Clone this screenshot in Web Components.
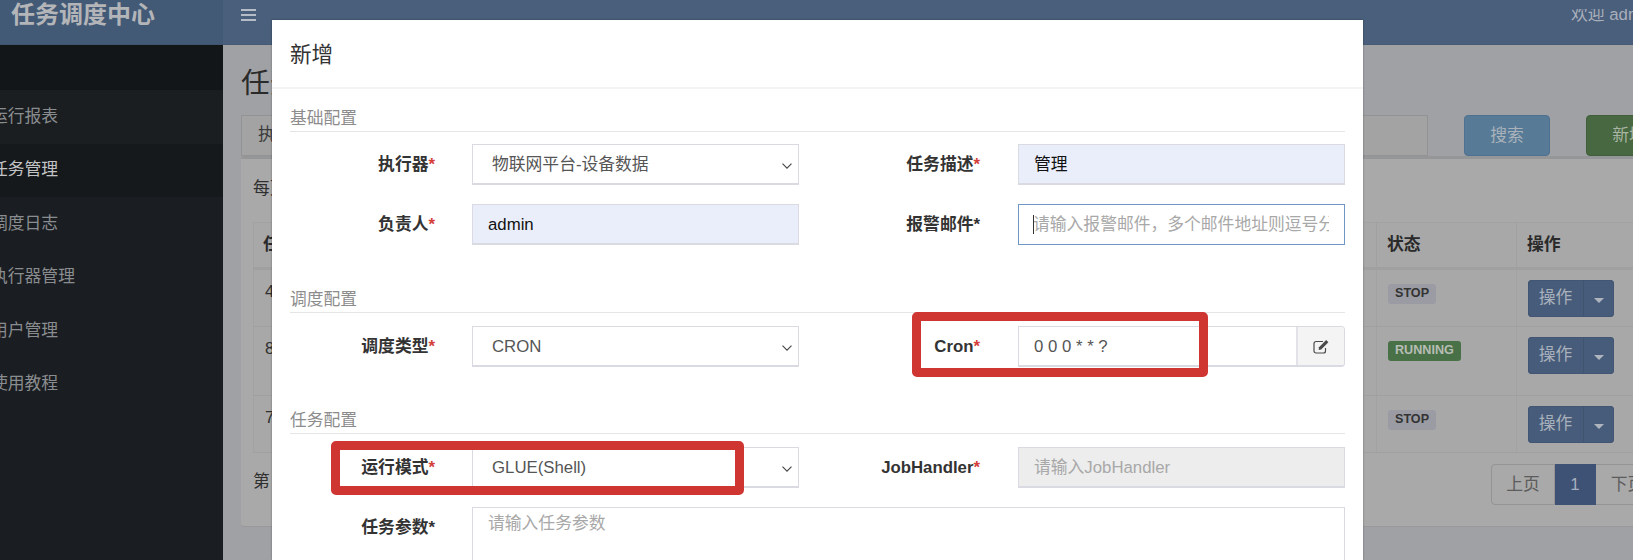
<!DOCTYPE html>
<html lang="zh">
<head>
<meta charset="utf-8">
<title>任务管理</title>
<style>
  html, body { margin: 0; height: 560px; overflow: hidden; }
  body { font: 16.8px/24px "Liberation Sans", "Noto Sans CJK SC", sans-serif; color: #333; background: #a0a1a4; }
</style>
</head>
<body>
<app-shell>
  <app-header slot="header" logo="任务调度中心" user="欢迎 admin"></app-header>
  <side-menu slot="side">
    <menu-item>运行报表</menu-item>
    <menu-item active>任务管理</menu-item>
    <menu-item>调度日志</menu-item>
    <menu-item>执行器管理</menu-item>
    <menu-item>用户管理</menu-item>
    <menu-item>使用教程</menu-item>
  </side-menu>
  <job-page></job-page>
</app-shell>

<modal-dialog heading="新增">
  <form-section heading="基础配置">
    <form-row>
      <form-field label="执行器"><form-input kind="select" value="物联网平台-设备数据"></form-input></form-field>
      <form-field wide label="任务描述"><form-input kind="filled" value="管理"></form-input></form-field>
    </form-row>
    <form-row>
      <form-field label="负责人"><form-input kind="filled" value="admin"></form-input></form-field>
      <form-field wide label="报警邮件" plain><form-input kind="focus" placeholder="请输入报警邮件，多个邮件地址则逗号分隔"></form-input></form-field>
    </form-row>
  </form-section>
  <form-section heading="调度配置">
    <form-row>
      <form-field label="调度类型"><form-input kind="select" value="CRON"></form-input></form-field>
      <form-field wide label="Cron"><form-input kind="addon" value="0 0 0 * * ?"></form-input></form-field>
    </form-row>
  </form-section>
  <form-section heading="任务配置" style="margin-top:-1px">
    <form-row>
      <form-field label="运行模式"><form-input kind="select" value="GLUE(Shell)"></form-input></form-field>
      <form-field wide label="JobHandler"><form-input kind="disabled" placeholder="请输入JobHandler"></form-input></form-field>
    </form-row>
    <form-row>
      <form-field full label="任务参数" plain><form-input kind="area" placeholder="请输入任务参数"></form-input></form-field>
    </form-row>
  </form-section>
  <mark-box slot="marks" style="left:640px;top:292px;width:296px;height:65px"></mark-box>
  <mark-box slot="marks" style="left:59px;top:421px;width:413px;height:54px"></mark-box>
</modal-dialog>

<script>
// small helper, every element just sets its shadow html once
class Base extends HTMLElement {
  connectedCallback() {
    if (this.shadowRoot) return;
    this.attachShadow({mode: 'open'}).innerHTML = this.render();
  }
  attr(name, dflt = '') { return this.getAttribute(name) ?? dflt; }
}

customElements.define('app-shell', class extends Base {
  render() { return `
    <style>
      :host { display: block; width: 1633px; height: 560px; overflow: hidden; }
      .below { display: flex; height: 515px; }
    </style>
    <slot name="header"></slot>
    <div class="below"><slot name="side"></slot><slot></slot></div>`; }
});

customElements.define('app-header', class extends Base {
  render() { return `
    <style>
      :host { display: flex; height: 45px; background: #4a5f7b; box-sizing: border-box; box-shadow: inset 0 -1px 0 #455a73; }
      .logo { width: 223px; flex: none; box-sizing: border-box; padding: 3px 0 0 11px; background: #435a77; color: #b3b5b8; font-size: 24px; font-weight: 700; line-height: 24px; box-shadow: inset 0 -1px 0 #40546e; }
      .bar { flex: 1; display: flex; justify-content: space-between; padding: 9px 0 0 18px; min-width: 0; }
      .burger { width: 15px; height: 12px; display: flex; flex-direction: column; justify-content: space-between; }
      .burger i { display: block; height: 2px; background: #b5bcc6; }
      .user { width: 62px; overflow: hidden; white-space: nowrap; color: #a9b0bb; line-height: 12px; }
    </style>
    <div class="logo">${this.attr('logo')}</div>
    <div class="bar">
      <div class="burger"><i></i><i></i><i></i></div>
      <div class="user">${this.attr('user')}</div>
    </div>`; }
});

customElements.define('side-menu', class extends Base {
  render() { return `
    <style>
      :host { display: block; width: 223px; flex: none; background: #1a1d21; overflow: hidden; }
      .top { height: 45px; background: #131619; }
    </style>
    <div class="top"></div>
    <slot></slot>`; }
});

customElements.define('menu-item', class extends Base {
  render() { return `
    <style>
      :host { display: flex; align-items: center; height: 53.5px; color: #8a8d90; white-space: nowrap; }
      :host(:first-child) { background: #1a1e21; }
      :host([active]) { background: #16191c; color: #c3c4c5; }
      span { margin-left: -9px; }
    </style>
    <span><slot></slot></span>`; }
});

customElements.define('job-page', class extends Base {
  render() { return `
    <style>
      :host { display: block; width: 1450px; flex: none; box-sizing: border-box; padding: 21px 0 0 18px; }
      h1 { margin: 0 0 15px; font: 400 28.8px/34px "Liberation Sans", "Noto Sans CJK SC", sans-serif; color: #2a2a2a; }
      .filters { display: flex; height: 41px; }
      .group { width: 1187px; flex: none; box-sizing: border-box; border: 1px solid #929394; background: #a3a3a3; padding: 7px 0 0 16px; color: #3a3a3a; }
      .btn { width: 86px; flex: none; height: 41px; box-sizing: border-box; margin-left: 36px; border-radius: 4px; color: #a9b2ba; text-align: center; line-height: 39px; }
      .search { background: #577a96; border: 1px solid #4f7090; }
      .add { background: #476840; border: 1px solid #405e39; color: #a9b4a5; }
      .panel { width: 1431px; box-sizing: border-box; border-top: 3px solid #959698; background: #a9a9a9; border-radius: 3px; padding: 18px 12px 21px; color: #2f2f2f; box-shadow: 0 1px 0 #98989a; }
      .len { margin-bottom: 21px; }
      .foot { display: flex; justify-content: space-between; margin-top: 11px; height: 41px; }
      .foot span { padding-top: 6px; }
      .pager { display: flex; }
      .pager div { height: 41px; box-sizing: border-box; border: 1px solid #949494; border-left: 0; text-align: center; line-height: 39px; width: 64px; color: #5c5c5c; background: #a9a9a9; }
      .pager div:first-child { border-left: 1px solid #949494; border-radius: 4px 0 0 4px; }
      .pager .on { width: 41px; background: #3e5276; border-color: #3e5276; color: #a7afbe; }
    </style>
    <h1>任务管理</h1>
    <div class="filters">
      <div class="group">执行器</div>
      <div class="btn search">搜索</div>
      <div class="btn add">新增</div>
    </div>
    <div class="panel">
      <div class="len">每页 10 条记录</div>
      <job-table>
        <job-row id-text="4" status="STOP"></job-row>
        <job-row id-text="8" status="RUNNING" tall></job-row>
        <job-row id-text="7" status="STOP"></job-row>
      </job-table>
      <div class="foot">
        <span>第 1 页</span>
        <div class="pager"><div>上页</div><div class="on">1</div><div>下页</div></div>
      </div>
    </div>`; }
});

customElements.define('job-table', class extends Base {
  render() { return `
    <style>
      :host { display: block; width: 1407px; background: #a8a8a8; box-shadow: inset 0 0 0 1px #a2a2a2; }
      .head { display: grid; grid-template-columns: 1124px 140px 143px; height: 48px; box-sizing: border-box; border-bottom: 3px solid #a0a0a0; font-weight: 700; color: #2a2a2a; }
      .head div { padding: 11px 10px 0 10px; border-right: 1px solid #a0a0a0; }
    </style>
    <div class="head"><div>任务ID</div><div>状态</div><div>操作</div></div>
    <slot></slot>`; }
});

customElements.define('job-row', class extends Base {
  render() {
    const run = this.attr('status') === 'RUNNING';
    return `
    <style>
      :host { display: grid; grid-template-columns: 1124px 140px 143px; height: 57px; box-sizing: border-box; border-bottom: 1px solid #a0a0a0; color: #2f2f2f; }
      :host([tall]) { height: 69px; }
      .c { padding: 10px 10px 0 11px; border-right: 1px solid #a2a2a2; }
      .c.id { padding-left: 12px; }
      .badge { display: inline-block; vertical-align: top; margin-top: 4px; height: 20px; padding: 0 7px; border-radius: 3px; font-size: 12.6px; font-weight: 700; line-height: 19px; background: ${run ? '#497147' : '#9b9ca3'}; color: ${run ? '#b7bdb5' : '#333'}; }
      .split { display: flex; width: 86px; height: 37px; border-radius: 4px; background: #475c7a; color: #a9b1bc; box-shadow: inset 0 0 0 1px #425674; }
      .split span { width: 55px; text-align: center; line-height: 36px; border-right: 1px solid #41546f; }
      .split i { flex: 1; align-self: center; margin: 3px 10px 0; border: 5px solid transparent; border-top-color: #aeb5bf; border-bottom: 0; width: 0; height: 0; }
    </style>
    <div class="c id">${this.attr('id-text')}</div>
    <div class="c"><span class="badge">${this.attr('status')}</span></div>
    <div class="c"><div class="split"><span>操作</span><i></i></div></div>`;
  }
});

customElements.define('modal-dialog', class extends Base {
  render() { return `
    <style>
      :host { display: block; position: absolute; left: 272px; top: 20px; width: 1091px; height: 540px; background: #fff; box-shadow: 0 0 2px rgba(0,0,0,.35); overflow: hidden; }
      header { height: 67px; box-sizing: border-box; padding: 22px 18px 0; font-size: 21.6px; line-height: 26px; color: #333; }
      .rule { height: 2px; background: #f4f4f4; }
      .body { padding: 16px 18px 0; }
    </style>
    <header>${this.attr('heading')}</header>
    <div class="rule"></div>
    <div class="body"><slot></slot></div>
    <slot name="marks"></slot>`; }
});

customElements.define('form-section', class extends Base {
  render() { return `
    <style>
      :host { display: block; margin-bottom: 41px; }
      h4 { margin: 0 0 13px; height: 27px; box-sizing: border-box; border-bottom: 1px solid #e5e5e5; font: 400 16.8px/28px "Liberation Sans", "Noto Sans CJK SC", sans-serif; color: #8c8c8c; }
      :host(:first-child) h4 { margin-bottom: 12px; }
    </style>
    <h4>${this.attr('heading')}</h4>
    <slot></slot>`; }
});

customElements.define('form-row', class extends Base {
  render() { return `
    <style>
      :host { display: flex; margin-bottom: 19px; }
      :host(:last-child) { margin-bottom: 0; }
    </style>
    <slot></slot>`; }
});

customElements.define('form-field', class extends Base {
  render() {
    const star = this.hasAttribute('plain') ? '#333' : '#d43f3a';
    return `
    <style>
      :host { display: flex; width: 509px; flex: none; }
      :host([wide]) { width: 546px; }
      :host([full]) { width: 1055px; }
      label { flex: none; width: 145px; margin-right: 37px; text-align: right; font-weight: 700; line-height: 41px; color: #333; white-space: nowrap; }
      :host([wide]) label { width: 181px; margin-right: 38px; }
      b { color: ${star}; font-weight: 700; }
      ::slotted(*) { flex: 1; min-width: 0; }
    </style>
    <label>${this.attr('label')}<b>*</b></label>
    <slot></slot>`;
  }
});

customElements.define('form-input', class extends Base {
  render() {
    const value = this.attr('value'), ph = this.attr('placeholder');
    const kind = this.attr('kind');
    let tail = '';
    if (kind === 'select') tail = `<svg class="chev" width="10" height="6" viewBox="0 0 10 6"><path d="M.5.7 5 5.2 9.5.7" fill="none" stroke="#444" stroke-width="1.1"/></svg>`;
    if (kind === 'addon') tail = `<div class="btn"><svg width="17" height="15" viewBox="0 0 17 15"><path d="M12.5 9v3a2 2 0 0 1-2 2H3a2 2 0 0 1-2-2V4.500a2 2 0 0 1 2-2h7" fill="none" stroke="#4a4a4a" stroke-width="1.2"/><path d="M6 8.200 13.200 1l2.200 2.200L8.200 10.400 5.700 11z" fill="#4a4a4a"/></svg></div>`;
    return `
    <style>
      :host { display: block; }
      .box { display: flex; align-items: center; height: 41px; box-sizing: border-box; border: 1px solid #dadae3; border-bottom-width: 2px; background: #fff; padding-left: 15px; color: #555; position: relative; overflow: hidden; }
      .t { flex: 1; min-width: 0; white-space: nowrap; overflow: hidden; margin-right: 15px; padding-top: 1px; }
      .ph { color: #a8a8a8; }
      .select { padding-left: 19px; }
      .chev { position: absolute; right: 6px; top: 18px; }
      .filled { background: #e9eefa; }
      .filled .t { color: #111; }
      .focus { border: 1px solid #7096c4; }
      .focus .t { margin-left: -1px; position: relative; }
      .focus .t::before { content: ""; position: absolute; left: 0; top: 3px; width: 1px; height: 19px; background: #333; }
      .disabled { background: #ededed; }
      .addon { border-radius: 0 4px 4px 0; }
      .btn { flex: none; width: 48px; height: 100%; box-sizing: border-box; border-left: 2px solid #e2e2e8; background: #f4f4f4; display: flex; align-items: center; justify-content: center; }
      .area { height: 120px; align-items: flex-start; padding-top: 3px; }
    </style>
    <div class="box ${kind}">
      <div class="t ${value ? '' : 'ph'}">${value || ph}</div>${tail}
    </div>`;
  }
});

// the red rectangles somebody drew on top of the screenshot
customElements.define('mark-box', class extends Base {
  render() { return `
    <style>
      :host { display: block; position: absolute; box-sizing: border-box; border: 9px solid #cf3632; border-radius: 5px; }
    </style>`; }
});
</script>
</body>
</html>
